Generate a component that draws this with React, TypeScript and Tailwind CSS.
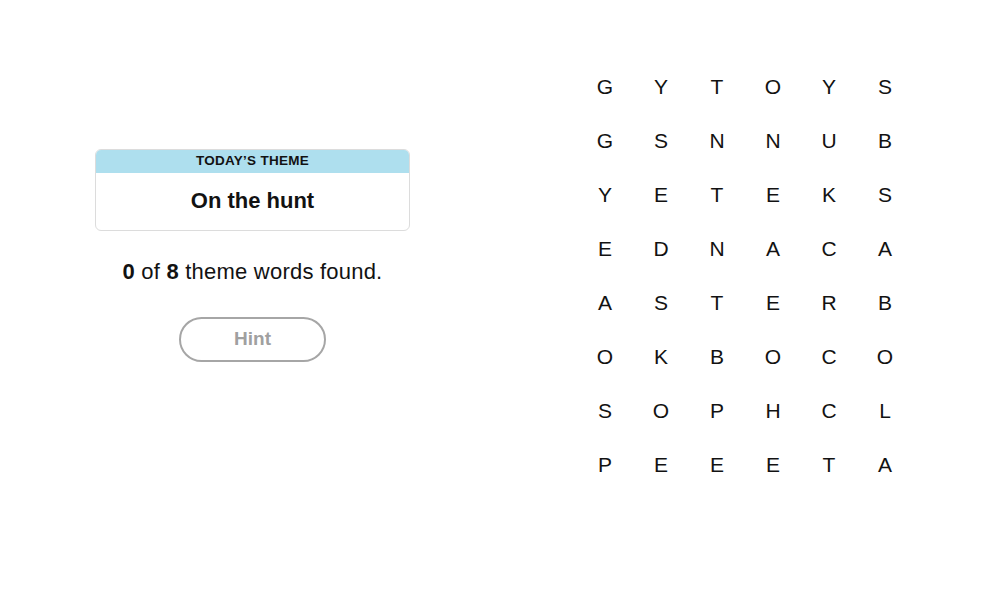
import React from "react";

const rows = [
  "GYTOYS",
  "GSNNUB",
  "YETEKS",
  "EDNACA",
  "ASTERB",
  "OKBOCO",
  "SOPHCL",
  "PEEETA",
];

export default function App() {
  return (
    <div
      className="w-[982px] h-[599px] bg-white text-[#121212] flex items-start"
      style={{ fontFamily: '"Liberation Sans", Arial, sans-serif' }}
    >
      <div className="w-[315px] ml-[95px] mt-[149px] flex flex-col items-center">
        <div className="w-full rounded-[6px] border border-[#dcdcdc] overflow-hidden">
          <div className="bg-[#aedfee] h-[23px] flex items-center justify-center text-[13.5px] font-semibold tracking-[0.02em] text-[#121212]">
            TODAY’S THEME
          </div>
          <div className="h-[57px] flex items-center justify-center text-[22px] font-bold pb-[2px]">
            On the hunt
          </div>
        </div>
        <div className="mt-[29px] text-[22px] leading-[24px] tracking-[0.01em]">
          <span className="font-bold">0</span> of <span className="font-bold">8</span> theme words found.
        </div>
        <button className="mt-[33px] w-[147px] h-[45px] rounded-full border-2 border-[#a6a6a6] text-[19px] font-bold text-[#a0a0a0] flex items-center justify-center">
          Hint
        </button>
      </div>
      <div className="ml-[167px] mt-[60px] grid grid-cols-[repeat(6,56px)] auto-rows-[54px]">
        {rows.map((r, i) =>
          r.split("").map((c, j) => (
            <div
              key={`${i}-${j}`}
              className="w-[56px] h-[54px] flex items-center justify-center text-[21px]"
            >
              {c}
            </div>
          ))
        )}
      </div>
    </div>
  );
}
